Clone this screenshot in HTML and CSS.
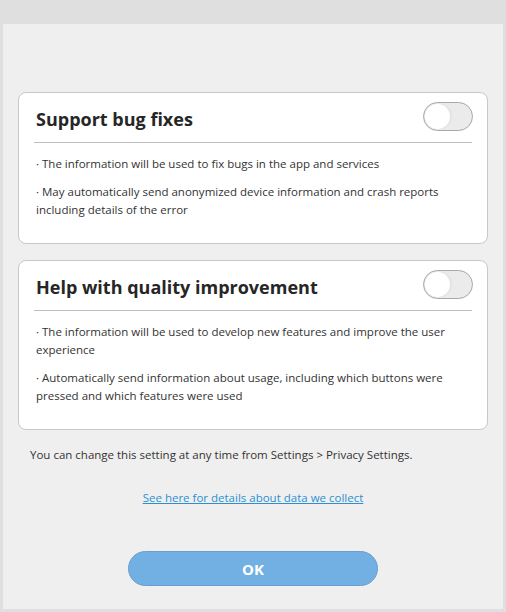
FILE: index.html
```html
<!DOCTYPE html>
<html lang="en">
<head>
    <meta charset="UTF-8">
    <meta name="viewport" content="width=device-width, initial-scale=1.0">
    <title>Privacy Settings</title>
    <link rel="stylesheet" href="styles.css">
</head>
<body>
    <div class="dialog">
        <div class="card">
            <div class="card-header">
                <h2>Support bug fixes</h2>
                <label class="switch">
                    <input type="checkbox">
                    <span class="slider"></span>
                </label>
            </div>
            <div class="card-body">
                <p>· The information will be used to fix bugs in the app and services</p>
                <p>· May automatically send anonymized device information and crash reports including details of the error</p>
            </div>
        </div>

        <div class="card">
            <div class="card-header">
                <h2>Help with quality improvement</h2>
                <label class="switch">
                    <input type="checkbox">
                    <span class="slider"></span>
                </label>
            </div>
            <div class="card-body">
                <p>· The information will be used to develop new features and improve the user experience</p>
                <p>· Automatically send information about usage, including which buttons were pressed and which features were used</p>
            </div>
        </div>

        <p class="note">You can change this setting at any time from Settings &gt; Privacy Settings.</p>

        <a class="details" href="#">See here for details about data we collect</a>

        <button class="ok">OK</button>
    </div>
</body>
</html>
```

FILE: styles.css
```css
body {
    margin: 0;
    background-color: #dfdfdf;
    font-family: "Open Sans", "Noto Sans", sans-serif;
    color: #333;
}

.dialog {
    margin: 24px 3px 0;
    height: 585px;
    box-sizing: border-box;
    background-color: #efefef;
    padding: 68px 15px 0;
    display: flex;
    flex-direction: column;
}

.card {
    background: #fff;
    border: 1px solid #c8c8c8;
    border-radius: 8px;
    padding: 0 15px 24px;
}

.card + .card {
    margin-top: 16px;
}

.card-header {
    height: 49px;
    border-bottom: 1px solid #bdbdbd;
    display: flex;
    align-items: center;
    justify-content: space-between;
    padding-left: 2px;
}

.card-header h2 {
    margin: 3px 0 0;
    font-size: 18px;
    font-weight: bold;
    color: #262626;
}

.switch {
    position: relative;
    display: block;
    width: 50px;
    height: 29px;
    margin-right: -1px;
    margin-top: -2px;
}

.switch input {
    opacity: 0;
    width: 0;
    height: 0;
}

.slider {
    position: absolute;
    top: 0;
    left: 0;
    right: 0;
    bottom: 0;
    box-sizing: border-box;
    border: 1px solid #a8a8a8;
    border-radius: 15px;
    background-color: #ebebeb;
    cursor: pointer;
}

.slider:before {
    content: "";
    position: absolute;
    left: 1px;
    top: 1px;
    width: 25px;
    height: 25px;
    border-radius: 50%;
    background: #fff;
    box-shadow: 2px 0 3px rgba(0, 0, 0, 0.04);
}

.card-body {
    padding: 12px 0 0 2px;
}

.card-body p {
    margin: 0 0 10px;
    font-size: 11.5px;
    line-height: 18px;
    color: #333;
}

.card-body p:last-child {
    margin-bottom: 0;
}

.note {
    margin: 16px 0 0 12px;
    font-size: 11.5px;
    line-height: 18px;
    color: #333;
}

.details {
    align-self: center;
    margin-top: 25px;
    font-size: 11.5px;
    line-height: 18px;
    color: #2b8fd3;
}

.ok {
    align-self: center;
    margin-top: 44px;
    width: 250px;
    height: 35px;
    border: 1px solid #6b9ed0;
    border-radius: 18px;
    background-color: #72b0e4;
    color: #fff;
    font-family: inherit;
    font-size: 15px;
    font-weight: bold;
    cursor: pointer;
}
```
